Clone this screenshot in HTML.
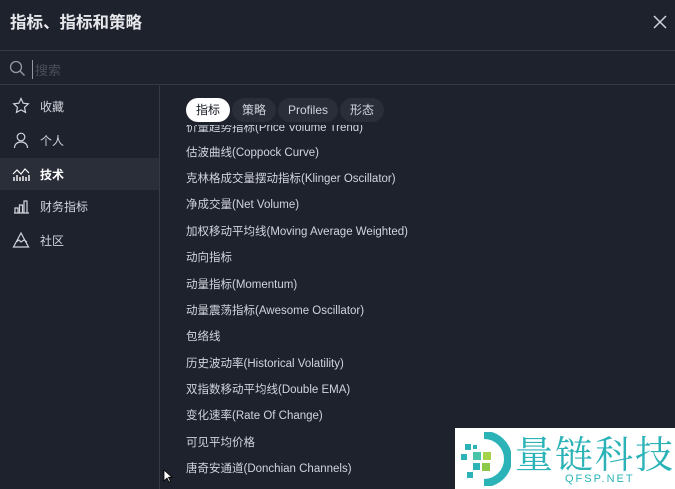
<!DOCTYPE html>
<html><head><meta charset="utf-8"><style>
*{margin:0;padding:0;box-sizing:border-box}
body{width:675px;height:489px;background:#1e222d;color:#d1d4dc;font-family:"Liberation Sans","Noto Sans CJK SC",sans-serif;position:relative;overflow:hidden}
.hdr{position:absolute;left:0;top:0;width:675px;height:51px;border-bottom:1px solid #363a45}
.hdr h1{position:absolute;left:10px;top:9px;font-size:16.5px;font-weight:bold;color:#e6e7ea}
.close{position:absolute;right:8px;top:15px}
.search{position:absolute;top:52px;left:0;width:675px;height:33px;border-bottom:1px solid #363a45}
.search .ph{position:absolute;left:32px;top:8px;font-size:13px;color:#4a4e59;border-left:1px solid #9598a1;padding-left:2px}
.side{position:absolute;top:86px;left:0;width:160px;height:403px;border-right:1px solid #363a45}
.it{position:absolute;left:0;width:159px;height:32px;font-size:12px;color:#d1d4dc}
.it span{position:absolute;left:40px;top:8px}
.it svg{position:absolute;left:12px;top:7px}
.act{background:#2a2e39;font-weight:bold;color:#fff}
.tabs{position:absolute;top:98px;left:186px}
.tab{position:absolute;top:0;height:24px;line-height:24px;border-radius:12px;background:#2a2e39;font-size:12px;padding:0 10px;color:#d1d4dc;white-space:nowrap}
.tab.on{background:#fff;color:#131722}
.list{position:absolute;left:186px;font-size:11.5px;color:#d1d4dc}
.list div{position:absolute;left:0;white-space:nowrap}
.logo{position:absolute;left:455px;top:428px;width:220px;height:61px;background:#fff}
</style></head><body>
<div class="hdr"><h1>指标、指标和策略</h1>
<svg class="close" width="14" height="14" viewBox="0 0 14 14"><path d="M1 1L13 13M13 1L1 13" stroke="#d1d4dc" stroke-width="1.5"/></svg></div>
<div class="search">
<svg style="position:absolute;left:9px;top:8px" width="17" height="17" viewBox="0 0 17 17"><circle cx="7" cy="7" r="5.5" stroke="#9598a1" stroke-width="1.3" fill="none"/><path d="M11 11L15.5 15.5" stroke="#9598a1" stroke-width="1.4"/></svg>
<div class="ph">搜索</div></div>
<div class="side">
<div class="it" style="top:4px"><svg width="18" height="18" viewBox="0 0 18 18"><path d="M9 1.5l2.2 4.7 5.1.6-3.8 3.5 1 5.1L9 12.9l-4.5 2.5 1-5.1L1.7 6.8l5.1-.6z" fill="none" stroke="#d1d4dc" stroke-width="1.2"/></svg><span>收藏</span></div>
<div class="it" style="top:38px"><svg width="18" height="18" viewBox="0 0 18 18"><circle cx="9" cy="6" r="3.8" fill="none" stroke="#d1d4dc" stroke-width="1.2"/><path d="M2.5 17c0-4 3-6 6.5-6s6.5 2 6.5 6" fill="none" stroke="#d1d4dc" stroke-width="1.2"/></svg><span>个人</span></div>
<div class="it act" style="top:72px"><svg width="18" height="18" viewBox="0 0 18 18"><path d="M1 9l4-4 4 4 4-5 4 4" fill="none" stroke="#fff" stroke-width="1.2"/><path d="M2 16v-4M5 16v-6M8 16v-4M11 16v-5M14 16v-4M17 16v-6" stroke="#fff" stroke-width="1.4"/></svg><span>技术</span></div>
<div class="it" style="top:104px"><svg width="18" height="18" viewBox="0 0 18 18"><path d="M2 16h15M3 16v-5h3v5M7.5 16V8h3v8M12 16V4h3v12" fill="none" stroke="#d1d4dc" stroke-width="1.2"/></svg><span>财务指标</span></div>
<div class="it" style="top:138px"><svg width="18" height="18" viewBox="0 0 18 18"><path d="M9 2L1.5 16h15z M4 11l3-2 2 2 3-2 3 2" fill="none" stroke="#d1d4dc" stroke-width="1.2"/></svg><span>社区</span></div>
</div>
<div class="tabs">
<div class="tab on" style="left:0">指标</div>
<div class="tab" style="left:46px">策略</div>
<div class="tab" style="left:92px">Profiles</div>
<div class="tab" style="left:154px">形态</div>
</div>
<div class="list" style="top:0">
<div style="top:119px;clip-path:inset(6px 0 0 0)">价量趋势指标(Price Volume Trend)</div>
<div style="top:144px">估波曲线(Coppock Curve)</div>
<div style="top:170px">克林格成交量摆动指标(Klinger Oscillator)</div>
<div style="top:196px">净成交量(Net Volume)</div>
<div style="top:223px">加权移动平均线(Moving Average Weighted)</div>
<div style="top:249px">动向指标</div>
<div style="top:276px">动量指标(Momentum)</div>
<div style="top:302px">动量震荡指标(Awesome Oscillator)</div>
<div style="top:328px">包络线</div>
<div style="top:355px">历史波动率(Historical Volatility)</div>
<div style="top:381px">双指数移动平均线(Double EMA)</div>
<div style="top:407px">变化速率(Rate Of Change)</div>
<div style="top:434px">可见平均价格</div>
<div style="top:460px">唐奇安通道(Donchian Channels)</div>
</div>
<svg style="position:absolute;left:163px;top:469px" width="10" height="14" viewBox="0 0 10 14"><path d="M1 1v11l3-3 2 4 1.5-.7-2-4H9z" fill="#fff" stroke="#000" stroke-width=".8"/></svg>
<div class="logo">
<svg style="position:absolute;left:2px;top:4px" width="54" height="54" viewBox="0 0 54 54">
<path d="M27 3a24 24 0 0 1 0 48" fill="none" stroke="#2bb3b8" stroke-width="8"/>
<rect x="8" y="12" width="6" height="6" fill="#2bb3b8"/><rect x="16" y="20" width="8" height="8" fill="#49c3a8"/><rect x="26" y="20" width="8" height="8" fill="#a5d34a"/><rect x="4" y="22" width="6" height="6" fill="#2bb3b8"/><rect x="16" y="31" width="7" height="7" fill="#2bb3b8"/><rect x="25" y="31" width="8" height="8" fill="#8cc84a"/><rect x="10" y="40" width="6" height="6" fill="#2bb3b8"/><rect x="16" y="13" width="4" height="4" fill="#2bb3b8"/>
</svg>
<div style="position:absolute;left:60px;top:2px;font-family:'Noto Serif CJK SC',serif;font-size:38px;line-height:44px;color:#2bb3b8;letter-spacing:2px">量链科技</div>
<div style="position:absolute;left:110px;top:45px;font-size:11px;color:#2bb3b8;letter-spacing:2px">QFSP.NET</div>
</div>
</body></html>
